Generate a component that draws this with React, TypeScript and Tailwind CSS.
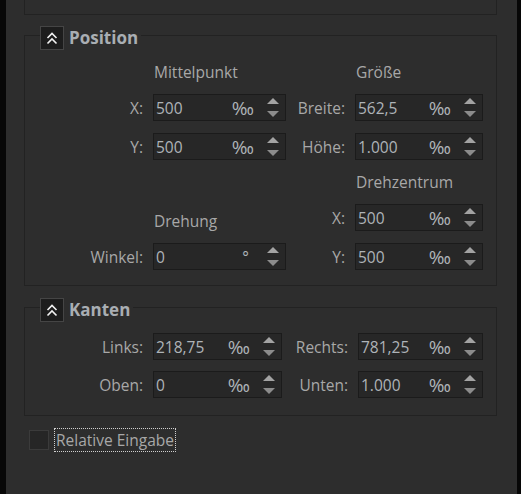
import type { ReactNode } from 'react'

function Spinner() {
  return (
    <svg width="12" height="19" viewBox="0 0 12 19" className="shrink-0">
      <polygon points="6,0 12,6 0,6" fill="#a3a3a3" />
      <polygon points="0,13 12,13 6,19" fill="#8c8c8c" />
    </svg>
  )
}

function CollapseButton() {
  return (
    <div className="flex h-[24px] w-[24px] items-center justify-center border border-[#454545] bg-[#1d1d1d]">
      <svg width="12" height="13" viewBox="0 0 12 13" fill="none" stroke="#f2f2f2" strokeWidth="1.6">
        <path d="M1.5 6 L6 1.5 L10.5 6" />
        <path d="M1.5 11.5 L6 7 L10.5 11.5" />
      </svg>
    </div>
  )
}

function Field({ value, unit, className }: { value: string; unit: string; className: string }) {
  return (
    <div className={`flex h-[27px] items-center border border-[#1b1b1b] bg-[#272727] ${className}`}>
      <span className="flex-1 pl-[2px] text-[#aeb3b8]">{value}</span>
      {unit === '°' ? (
        <span className="pr-[5px] text-[#aeb3b8]">°</span>
      ) : (
        <span className="text-[19px] text-[#aeb3b8]">‰</span>
      )}
      <span className="ml-[13px] mr-[6px]">
        <Spinner />
      </span>
    </div>
  )
}

function Label({ children }: { children: ReactNode }) {
  return <div className="pr-[10px] text-right text-[#a8a8a8]">{children}</div>
}

function Group({ title, children, className }: { title: string; children: ReactNode; className: string }) {
  return (
    <div className={`ml-[18px] mr-[20px] border border-[#222222] ${className}`}>
      <div className="-mt-[10px] ml-[15px] flex w-fit items-center gap-[5px] bg-[#2d2d2d] pr-[3px]">
        <CollapseButton />
        <span className="text-[17px] font-bold text-[#a9aeb3]">{title}</span>
      </div>
      {children}
    </div>
  )
}

export default function App() {
  return (
    <div className="flex h-[494px] w-[521px] bg-[#070707] pl-[6px] pr-[4px] font-['Open_Sans',sans-serif] text-[15.5px] leading-[20px]">
      <div className="flex-1 bg-[#2d2d2d]">
        <div className="ml-[18px] mr-[20px] h-[15px] border-x border-b border-[#222222]" />

        <Group title="Position" className="mt-[20px] pb-[15px]">
          <div className="mt-[12px] grid grid-cols-[128px_133px_69px_128px] items-center gap-y-[12px]">
            <div />
            <div className="pl-[1px] text-[#a8a8a8]">Mittelpunkt</div>
            <div />
            <div className="pl-[1px] text-[#a8a8a8]">Größe</div>

            <Label>X:</Label>
            <Field value="500" unit="‰" className="w-[133px]" />
            <Label>Breite:</Label>
            <Field value="562,5" unit="‰" className="w-[128px]" />

            <Label>Y:</Label>
            <Field value="500" unit="‰" className="w-[133px]" />
            <Label>Höhe:</Label>
            <Field value="1.000" unit="‰" className="w-[128px]" />

            <div />
            <div />
            <div />
            <div className="pl-[1px] text-[#a8a8a8]">Drehzentrum</div>

            <div />
            <div className="self-end pl-[1px] text-[#a8a8a8]">Drehung</div>
            <Label>X:</Label>
            <Field value="500" unit="‰" className="w-[128px]" />

            <Label>Winkel:</Label>
            <Field value="0" unit="°" className="w-[133px]" />
            <Label>Y:</Label>
            <Field value="500" unit="‰" className="w-[128px]" />
          </div>
        </Group>

        <Group title="Kanten" className="mt-[21px] pb-[17px]">
          <div className="mt-[11px] grid grid-cols-[128px_129px_76px_125px] items-center gap-y-[11px]">
            <Label>Links:</Label>
            <Field value="218,75" unit="‰" className="w-[129px]" />
            <Label>Rechts:</Label>
            <Field value="781,25" unit="‰" className="w-[125px]" />

            <Label>Oben:</Label>
            <Field value="0" unit="‰" className="w-[129px]" />
            <Label>Unten:</Label>
            <Field value="1.000" unit="‰" className="w-[125px]" />
          </div>
        </Group>

        <label className="ml-[23px] mt-[12px] flex w-fit items-center gap-[5px]">
          <span className="h-[20px] w-[20px] border border-[#3b3b3b] bg-[#262626]" />
          <span className="border border-dotted border-[#d0d0d0] px-[1px] py-[1px] text-[#a8a8a8]">Relative Eingabe</span>
        </label>
      </div>
    </div>
  )
}
